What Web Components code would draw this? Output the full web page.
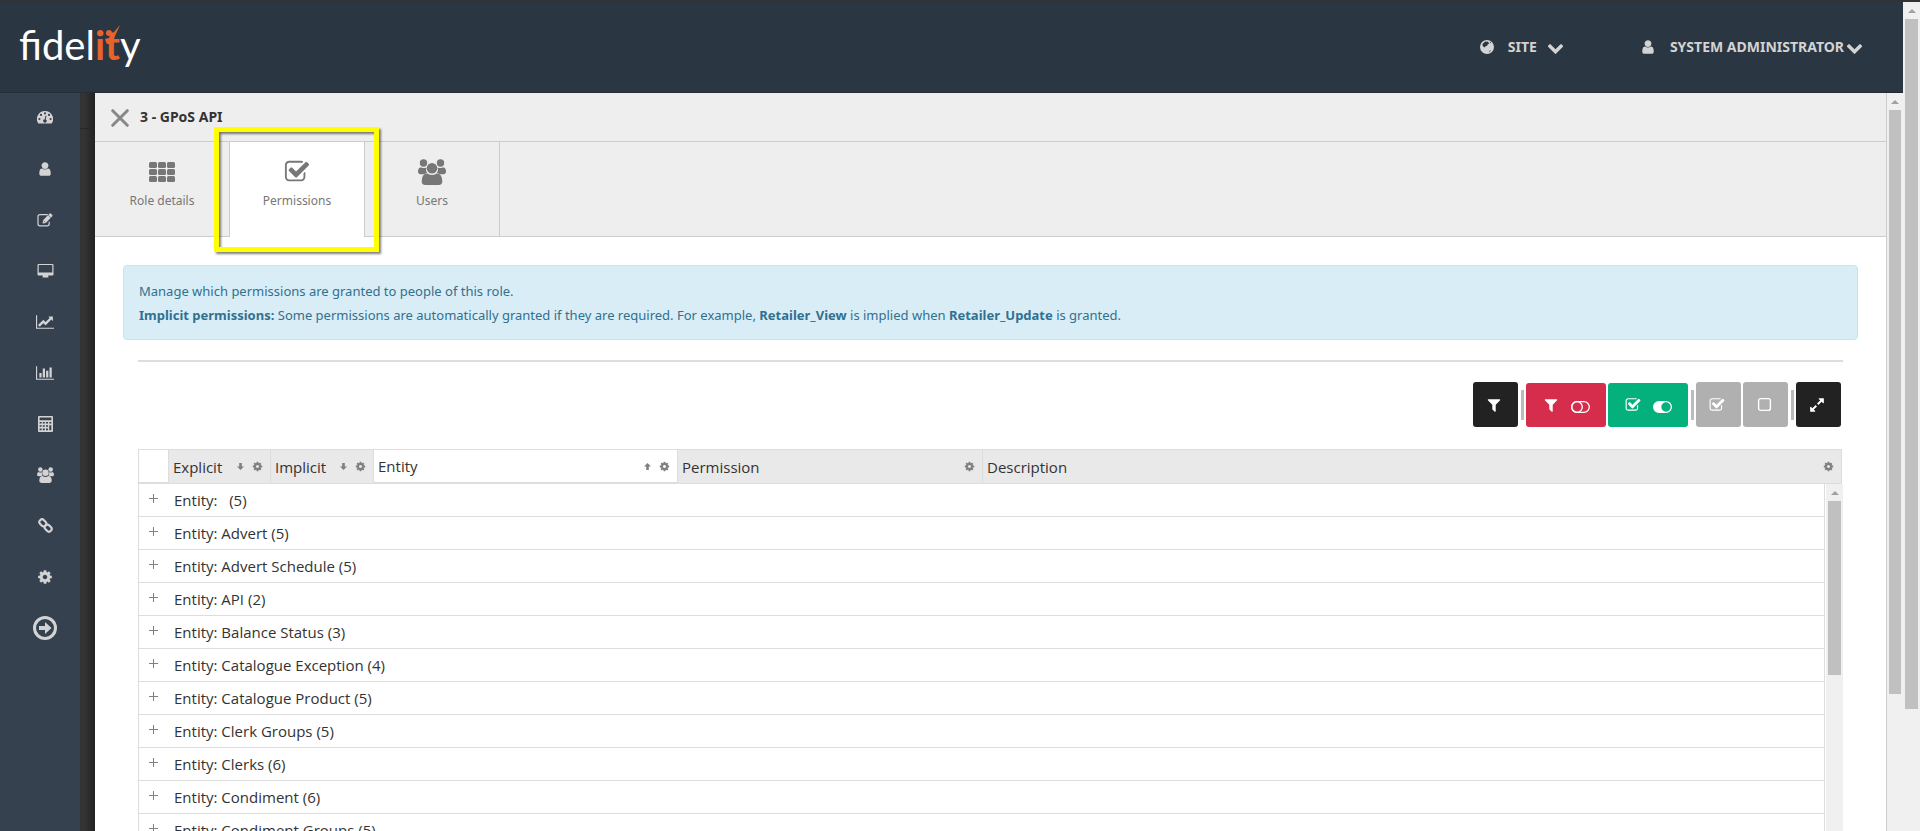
<!DOCTYPE html>
<html lang="en">
<head>
<meta charset="utf-8">
<title>Fidelity - Role permissions</title>
<style>
  body {
    margin: 0;
    height: 100vh;
    overflow: hidden;
    background: #333;
    color: #333;
    font: 13px/24px "Noto Sans", "Open Sans", sans-serif;
  }
</style>
</head>
<body>
<fid-app></fid-app>

<script>
// [viewBox, markup]
const ICONS = {
  user: ["0 0 1792 1792", `<path d="M1536 1399q0 109-62.5 187t-150.5 78h-854q-88 0-150.5-78t-62.5-187q0-85 8.5-160.5t31.5-152 58.5-131 94-89 134.5-34.5q131 128 313 128t313-128q76 0 134.5 34.5t94 89 58.5 131 31.5 152 8.5 160.5zm-256-887q0 159-112.5 271.5t-271.5 112.5-271.5-112.5-112.5-271.5 112.5-271.5 271.5-112.5 271.5 112.5 112.5 271.5z"/>`],
  check: ["0 0 1792 1792", `<path d="M1472 930v318q0 119-84.5 203.5t-203.5 84.5h-832q-119 0-203.5-84.5t-84.5-203.5v-832q0-119 84.5-203.5t203.5-84.5h832q63 0 117 25 15 7 18 23 3 17-9 29l-49 49q-10 10-23 10-3 0-9-2-23-6-45-6h-832q-66 0-113 47t-47 113v832q0 66 47 113t113 47h832q66 0 113-47t47-113v-254q0-13 9-22l64-64q10-10 23-10 6 0 12 3 20 8 20 29zm231-489l-814 814q-24 24-57 24t-57-24l-430-430q-24-24-24-57t24-57l110-110q24-24 57-24t57 24l263 263 647-647q24-24 57-24t57 24l110 110q24 24 24 57t-24 57z"/>`],
  square: ["0 0 14 14", `<rect x="1.5" y="1.5" width="11" height="11" rx="2" fill="none" stroke="currentColor" stroke-width="1.3"/>`],
  cog: ["0 0 1792 1792", `<path d="M1152 896q0-106-75-181t-181-75-181 75-75 181 75 181 181 75 181-75 75-181zm512-109v222q0 12-8 23t-20 13l-185 28q-19 54-39 91 35 50 107 138 10 12 10 25t-9 23q-27 37-99 108t-94 71q-12 0-26-9l-138-108q-44 23-91 38-16 136-29 186-7 28-36 28h-222q-14 0-24.5-8.5t-11.5-21.5l-28-184q-49-16-90-37l-141 107q-10 9-25 9-14 0-25-11-126-114-165-168-7-10-7-23 0-12 8-23 15-21 51-66.5t54-70.5q-27-50-41-99l-183-27q-13-2-21-12.5t-8-23.5v-222q0-12 8-23t19-13l186-28q14-46 39-92-40-57-107-138-10-12-10-24 0-10 9-23 26-36 98.5-107.5t94.5-71.5q13 0 26 10l138 107q44-23 91-38 16-136 29-186 7-28 36-28h222q14 0 24.5 8.5t11.5 21.5l28 184q49 16 90 37l142-107q9-9 24-9 13 0 25 10 129 119 165 170 7 8 7 22 0 12-8 23-15 21-51 66.5t-54 70.5q26 50 41 98l183 28q13 2 21 12.5t8 23.5z"/>`],
  filter: ["0 0 1792 1792", `<path d="M1595 295q17 41-14 70l-493 493v742q0 42-39 59-13 5-25 5-27 0-45-19l-256-256q-19-19-19-45v-486l-493-493q-31-29-14-70 17-39 59-39h1280q42 0 59 39z"/>`],
  expand: ["0 0 1792 1792", `<path d="M883 1056q0 13-10 23l-332 332 144 144q19 19 19 45t-19 45-45 19h-448q-26 0-45-19t-19-45v-448q0-26 19-45t45-19 45 19l144 144 332-332q10-10 23-10t23 10l114 114q10 10 10 23zm781-864v448q0 26-19 45t-45 19-45-19l-144-144-332 332q-10 10-23 10t-23-10l-114-114q-10-10-10-23t10-23l332-332-144-144q-19-19-19-45t19-45 45-19h448q26 0 45 19t19 45z"/>`],
  chevron: ["0 0 1792 1792", `<path d="M1683 808l-742 741q-19 19-45 19t-45-19l-742-741q-19-19-19-45.5t19-45.5l166-165q19-19 45-19t45 19l531 531 531-531q19-19 45-19t45 19l166 165q19 19 19 45.5t-19 45.5z"/>`],
  line: ["0 0 2048 1792", `<path d="M2048 1536v128h-2048v-1536h128v1408h1920zm-128-1248v435q0 21-19.5 29.5t-35.5-7.5l-121-121-633 633q-10 10-23 10t-23-10l-233-233-416 416-192-192 585-585q10-10 23-10t23 10l233 233 464-464-121-121q-16-16-7.5-35.5t29.5-19.5h435q14 0 23 9t9 23z"/>`],
  bars: ["0 0 2048 1792", `<path d="M640 896v512h-256v-512h256zm384-512v1024h-256v-1024h256zm1024 1152v128h-2048v-1536h128v1408h1920zm-640-896v768h-256v-768h256zm384-384v1152h-256v-1152h256z"/>`],
  globe: ["0 0 14 14", `<path fill-rule="evenodd" d="M7 0a7 7 0 1 0 0 14A7 7 0 0 0 7 0zM3.4 3 5.5 1.6 8 1.8 9.2 3.4 7.8 4.2 7 6 5.6 6 5 7.4 3 6.4 2.4 4.6zM9.6 1.6 11 2.6 10.4 3.6zM8.6 11.4 10.6 10 10.2 11.4z"/>`],
  dash: ["0 0 16 13", `<path fill-rule="evenodd" d="M8 0a8 8 0 0 0-7 12q.2.5.8.5h12.4q.6 0 .8-.5A8 8 0 0 0 8 0zM8 1.2a1.1 1.1 0 1 1 0 2.2 1.1 1.1 0 0 1 0-2.2zM4 2.8A1.1 1.1 0 1 1 4 5a1.1 1.1 0 0 1 0-2.2zm8 0A1.1 1.1 0 1 1 12 5a1.1 1.1 0 0 1 0-2.2zM2.4 6.9a1.1 1.1 0 1 1 0 2.2 1.1 1.1 0 0 1 0-2.2zm11.2 0a1.1 1.1 0 1 1 0 2.2 1.1 1.1 0 0 1 0-2.2zM8.6 4.6l.9.2-.8 3.6a1.7 1.7 0 1 1-1-.2z"/>`],
  edit: ["0 0 16 14", `<path fill="none" stroke="currentColor" stroke-width="1.2" stroke-linecap="round" d="M10.3 1.6H3Q1 1.6 1 3.6v7.2q0 2 2 2h7.2q2 0 2-2V9.2"/><path d="m5.6 10.4.4-3.2L12.6.6q.6-.6 1.2 0l1.5 1.5q.6.6 0 1.2L8.8 9.9z"/><path stroke="#364150" stroke-width=".6" d="m11.2 2 2.7 2.7M6.5 7.6l1.8 1.8"/>`],
  desktop: ["0 0 16 14", `<path fill-rule="evenodd" d="M1 0h14q1 0 1 1v9.4q0 1-1 1h-4.4l.4 2H5l.4-2H1q-1 0-1-1V1Q0 0 1 0zm.2 1.1v7.5h13.6V1.1z"/>`],
  calc: ["0 0 15 16", `<path fill-rule="evenodd" d="M1 0h13q1 0 1 1v14q0 1-1 1H1q-1 0-1-1V1Q0 0 1 0zm.6 1.4v2.8h11.8V1.4zM1.6 6v1.6h2V6zm3.2 0v1.6h2V6zm3.2 0v1.6h2V6zm3.3 0v1.6h2V6zM1.6 9.2v1.6h2V9.2zm3.2 0v1.6h2V9.2zm3.2 0v1.6h2V9.2zM1.6 12.5v1.7h2v-1.7zm3.2 0v1.7h2v-1.7zm3.2 0v1.7h2v-1.7zm3.3-3.3v5h2v-5z"/>`],
  users: ["0 0 28 26", `<circle cx="5.5" cy="4" r="3.7"/><circle cx="22.5" cy="4" r="3.7"/><path d="M3 8.2q2.4 1.6 5.2.3-.6 3.6 1 5.4-1.6.1-2.8 1.3H3.2Q0 15.200 0 12.400 0 8.600 3 8.200zM25 8.200q-2.400 1.600-5.200.3.6 3.600-1 5.400 1.600.1 2.800 1.300h3.200q3.200 0 3.200-2.800 0-3.800-3-4.200z"/><circle cx="14" cy="9.300" r="5.300"/><path d="M9.400 14.600q4.600 3 9.200 0 5.700 0 5.700 8 0 3.400-3.600 3.400H7.300q-3.600 0-3.600-3.400 0-8 5.700-8z"/>`],
  link: ["0 0 14 14", `<g fill="none" stroke="currentColor" stroke-width="2"><rect x="1" y="2" width="7" height="5" rx="2.500" transform="rotate(45 4.500 4.500)"/><rect x="6" y="7" width="7" height="5" rx="2.500" transform="rotate(45 9.500 9.500)"/></g>`],
  next: ["0 0 24 24", `<circle cx="12" cy="12" r="10.500" fill="none" stroke="currentColor" stroke-width="3"/><path d="M6 10h6V6l6.500 6-6.500 6v-4H6z"/>`],
  th: ["0 0 26 20", [0, 7, 14].map((y) => [0, 9, 18].map((x) => `<rect x="${x}" y="${y}" width="8" height="6" rx="1.500"/>`).join("")).join("")],
  close: ["0 0 18 18", `<path stroke="currentColor" stroke-width="3" stroke-linecap="round" d="m1.700 1.700 14.600 14.600m0-14.600L1.700 16.300"/>`],
  plus: ["0 0 9 9", `<path d="M4 0h1v4h4v1H5v4H4V5H0V4h4z"/>`],
  down: ["0 0 8 8", `<path d="M2.500 0h3v4H8L4 8 0 4h2.500z"/>`],
  up: ["0 0 8 8", `<path d="M2.500 8h3V4H8L4 0 0 4h2.500z"/>`],
  off: ["0 0 19 12", `<g fill="none" stroke="currentColor" stroke-width="1.300"><rect x=".7" y=".7" width="17.600" height="10.600" rx="5.300"/><circle cx="6" cy="6" r="5.300"/></g>`],
  on: ["0 0 19 12", `<path fill-rule="evenodd" d="M6 0h7a6 6 0 0 1 0 12H6A6 6 0 0 1 6 0zm7 1.300a4.700 4.700 0 1 0 0 9.400 4.700 4.700 0 0 0 0-9.400z"/>`],
};

class FidIcon extends HTMLElement {
  constructor() {
    super();
    this.attachShadow({ mode: "open" });
  }
  connectedCallback() {
    const [viewBox, markup] = ICONS[this.getAttribute("name")];
    const w = this.getAttribute("w") || 14;
    const h = this.getAttribute("h") || w;
    this.shadowRoot.innerHTML = `
      <style>
        :host { display: inline-flex; flex: none; }
        svg { display: block; fill: currentColor; }
      </style>
      <svg width="${w}" height="${h}" viewBox="${viewBox}" aria-hidden="true">${markup}</svg>`;
  }
}
customElements.define("fid-icon", FidIcon);

// Shared by all elements whose shadow tree never changes
const define = (name, html) => {
  const template = document.createElement("template");
  template.innerHTML = html;
  customElements.define(name, class extends HTMLElement {
    constructor() {
      super();
      this.attachShadow({ mode: "open" });
      this.shadowRoot.appendChild(template.content.cloneNode(true));
    }
  });
};

define("fid-scrollbar", `
<style>
  :host { display: flex; flex-direction: column; flex: none; box-sizing: border-box; width: 17px; background: #f0f0f0; }
  .arrow { display: flex; justify-content: center; align-items: center; height: 17px; flex: none; }
  .arrow::before { content: ""; border: 4px solid transparent; border-top: 0; border-bottom-color: #a0a0a0; }
  .track { flex: 1; padding: 0 2px; }
  .thumb { height: var(--thumb, 50%); background: #c0c0c0; }
</style>
<div class="arrow"></div>
<div class="track"><div class="thumb"></div></div>
`);

define("fid-logo", `
<style>
  :host { display: block; }
  a { display: block; color: #fff; font: 40px/46px Lato, sans-serif; text-decoration: none; }
  span { position: relative; color: #e8622c; font-weight: bold; }
  /* raised arm above the t */
  svg { position: absolute; left: 8px; top: 4px; fill: #e8622c; }
</style>
<a href="#">fidel<span>it<svg width="18" height="20" viewBox="0 0 18 20" aria-hidden="true"><path d="M17 0 12 11 9 19H4L2 14l4-1z"/><circle cx="6" cy="8" r="3"/></svg></span>y</a>
`);

define("fid-menu-button", `
<style>
  :host { display: block; }
  button { display: flex; align-items: center; border: 0; padding: 0; background: none; color: #d3d3d3; font: bold 14px/24px "Noto Sans", sans-serif; text-transform: uppercase; }
  .label { margin: 0 var(--gap, 2px) 0 14px; }
</style>
<button type="button"><slot name="icon"></slot><span class="label"><slot></slot></span><fid-icon name="chevron" w="17"></fid-icon></button>
`);

define("fid-topbar", `
<style>
  :host { display: flex; justify-content: space-between; align-items: flex-start; box-sizing: border-box; height: 91px; padding: 20px 40px 0 19px; background: #2b3643; border-bottom: 1px solid #232c37; }
  nav { display: flex; gap: 76px; padding-top: 13px; }
  .site { --gap: 10px; }
</style>
<fid-logo></fid-logo>
<nav>
  <fid-menu-button class="site"><fid-icon slot="icon" name="globe"></fid-icon>Site</fid-menu-button>
  <fid-menu-button><fid-icon slot="icon" name="user" w="16"></fid-icon>System Administrator</fid-menu-button>
</nav>
`);

define("fid-sidebar", `
<style>
  :host { display: block; flex: none; width: 80px; background: #364150; color: #d3d3d3; }
  nav { display: flex; flex-direction: column; }
  a { display: flex; justify-content: center; align-items: center; box-sizing: border-box; height: 51px; padding: 0 0 2px 10px; color: inherit; }
</style>
<nav>
  <a href="#" aria-label="Dashboard"><fid-icon name="dash" w="16" h="13"></fid-icon></a>
  <a href="#" aria-label="Customers"><fid-icon name="user" w="16"></fid-icon></a>
  <a href="#" aria-label="Edit"><fid-icon name="edit" w="16" h="14"></fid-icon></a>
  <a href="#" aria-label="Terminals"><fid-icon name="desktop" w="17" h="14"></fid-icon></a>
  <a href="#" aria-label="Trends"><fid-icon name="line" w="18" h="16"></fid-icon></a>
  <a href="#" aria-label="Reports"><fid-icon name="bars" w="18" h="16"></fid-icon></a>
  <a href="#" aria-label="Accounts"><fid-icon name="calc" w="15" h="16"></fid-icon></a>
  <a href="#" aria-label="Groups"><fid-icon name="users" w="17" h="16"></fid-icon></a>
  <a href="#" aria-label="Links"><fid-icon name="link" w="15"></fid-icon></a>
  <a href="#" aria-label="Settings"><fid-icon name="cog" w="16"></fid-icon></a>
  <a href="#" aria-label="Expand"><fid-icon name="next" w="24"></fid-icon></a>
</nav>
`);

define("fid-tab", `
<style>
  :host { display: block; position: relative; width: 134px; height: 94px; border-right: 1px solid #ccc; }
  :host([active]) { height: 95px; margin-bottom: -1px; background: #fff; }
  button { display: flex; flex-direction: column; align-items: center; gap: 4px; width: 100%; height: 100%; padding: 17px 0 0; border: 0; background: none; color: #777; font: 12px/24px "Noto Sans", sans-serif; }
  .icon { display: flex; align-items: center; height: 26px; }
  /* marker drawn over the tab and its surroundings */
  :host([marked])::after { content: ""; position: absolute; inset: -15px -15px -15px -16px; border: 5px solid #ff0; filter: drop-shadow(2px 2px 1px rgba(0, 0, 0, .5)); pointer-events: none; z-index: 1; }
</style>
<button type="button"><span class="icon"><slot name="icon"></slot></span><slot></slot></button>
`);

define("fid-alert", `
<style>
  :host { display: block; padding: 13px 15px 12px; border: 1px solid #bce8f1; border-radius: 4px; background: #d9edf7; color: #31708f; }
  ::slotted(p) { margin: 0; }
</style>
<slot></slot>
`);

define("fid-button", `
<style>
  :host { display: block; }
  button { display: flex; justify-content: center; align-items: center; gap: 12px; width: 45px; height: 45px; padding: 0 3px 0 0; border: 0; border-radius: 3px; background: #222; color: #fff; }
  :host([wide]) button { width: 80px; height: 44px; padding: 0; }
  :host([kind="danger"]) button { background: #d62d4c; }
  :host([kind="success"]) button { background: #04b07b; }
  :host([kind="muted"]) button { background: #b0b0b0; }
</style>
<button type="button"><slot></slot></button>
`);

define("fid-toolbar", `
<style>
  :host { display: flex; justify-content: flex-end; align-items: flex-end; gap: 2px; padding-right: 2px; }
  i { width: 3px; height: 30px; margin: 0 0 7px 1px; background: #bbb; }
  .switch { padding-top: 3px; }
</style>
<fid-button><fid-icon name="filter" w="16"></fid-icon></fid-button>
<i></i>
<fid-button wide kind="danger"><fid-icon name="filter" w="16"></fid-icon><fid-icon class="switch" name="off" w="19" h="12"></fid-icon></fid-button>
<fid-button wide kind="success"><fid-icon name="check" w="16"></fid-icon><fid-icon class="switch" name="on" w="19" h="12"></fid-icon></fid-button>
<i></i>
<fid-button kind="muted"><fid-icon name="check" w="16"></fid-icon></fid-button>
<fid-button kind="muted"><fid-icon name="square" w="15"></fid-icon></fid-button>
<i></i>
<fid-button><fid-icon name="expand" w="16"></fid-icon></fid-button>
`);

const COLUMNS = [
  { title: "Explicit", width: 102, sort: "down" },
  { title: "Implicit", width: 103, sort: "down" },
  { title: "Entity", width: 304, sort: "up", active: true },
  { title: "Permission", width: 305 },
  { title: "Description" },
];

const GROUPS = [
  ["\u00a0", 5],
  ["Advert", 5],
  ["Advert Schedule", 5],
  ["API", 2],
  ["Balance Status", 3],
  ["Catalogue Exception", 4],
  ["Catalogue Product", 5],
  ["Clerk Groups", 5],
  ["Clerks", 6],
  ["Condiment", 6],
  ["Condiment Groups", 5],
];

class FidGrid extends HTMLElement {
  constructor() {
    super();
    this.attachShadow({ mode: "open" });
  }
  connectedCallback() {
    const heads = COLUMNS.map((c) => `
      <th scope="col" class="${c.active ? "active" : ""}" style="${c.width ? `width: ${c.width}px` : ""}">
        <div>
          <span>${c.title}</span>
          ${c.sort ? `<fid-icon name="${c.sort}" w="7"></fid-icon>` : ""}
          <button type="button" aria-label="${c.title} options"><fid-icon name="cog" w="11"></fid-icon></button>
        </div>
      </th>`).join("");

    const rows = GROUPS.map(([name, count]) => `
      <tr>
        <td class="toggle"><button type="button" aria-label="Expand group"><fid-icon name="plus" w="9"></fid-icon></button></td>
        <td>Entity: ${name} (${count})</td>
      </tr>`).join("");

    this.shadowRoot.innerHTML = `
      <style>
        :host { display: block; font: 15px/24px "Open Sans", sans-serif; }
        table { width: 100%; table-layout: fixed; border-collapse: separate; border-spacing: 0; }
        th, td { box-sizing: border-box; padding: 0; text-align: left; font-weight: normal; }
        button { display: flex; padding: 0; border: 0; background: none; color: #808080; }
        .head { padding-right: 1px; }
        th { height: 35px; border: 1px solid #ddd; border-left: 0; background: #e9e9e9; }
        th.active, th:first-child { background: #fff; border-bottom-width: 2px; }
        th:first-child { width: 31px; border-left: 1px solid #ddd; }
        th div { display: flex; align-items: center; gap: 8px; padding: 0 7px 0 4px; color: #808080; }
        th span { flex: 1; color: #333; }
        .body { display: flex; }
        .body table { flex: 1; width: auto; margin-right: 1px; border-right: 1px solid #ddd; }
        td { height: 33px; padding-left: 5px; border-bottom: 1px solid #ddd; white-space: pre; }
        td.toggle { width: 31px; padding: 0 2px 0 0; border-left: 1px solid #ddd; }
        .toggle button { margin: -4px auto 0; }
      </style>
      <div class="head"><table><thead><tr><th></th>${heads}</tr></thead></table></div>
      <div class="body"><table><tbody>${rows}</tbody></table><fid-scrollbar style="--thumb: 174px"></fid-scrollbar></div>`;
  }
}
customElements.define("fid-grid", FidGrid);

define("fid-panel", `
<style>
  :host { display: block; flex: 1; min-width: 0; background: #fff; }
  header { display: flex; align-items: center; gap: 11px; height: 48px; padding-left: 16px; background: #eee; border-bottom: 1px solid #ccc; }
  header button { display: flex; padding: 2px 0 0; border: 0; background: none; color: #888; }
  h1 { margin: 0; font: bold 14px/24px "Noto Sans", sans-serif; }
  .tabs { display: flex; background: #eee; border-bottom: 1px solid #ccc; }
  .content { padding: 28px; }
  .inner { padding: 0 15px; }
  hr { height: 2px; margin: 20px 0; border: 0; background: #ddd; }
  fid-grid { margin-top: 22px; }
</style>
<header>
  <button type="button" aria-label="Close"><fid-icon name="close" w="18"></fid-icon></button>
  <h1>3 - GPoS API</h1>
</header>
<div class="tabs">
  <fid-tab><fid-icon slot="icon" name="th" w="26" h="20"></fid-icon>Role details</fid-tab>
  <fid-tab active marked><fid-icon slot="icon" name="check" w="26"></fid-icon>Permissions</fid-tab>
  <fid-tab><fid-icon slot="icon" name="users" w="28" h="26"></fid-icon>Users</fid-tab>
</div>
<div class="content">
  <fid-alert>
    <p>Manage which permissions are granted to people of this role.</p>
    <p><b>Implicit permissions:</b> Some permissions are automatically granted if they are required. For example, <b>Retailer_View</b> is implied when <b>Retailer_Update</b> is granted.</p>
  </fid-alert>
  <div class="inner">
    <hr>
    <fid-toolbar></fid-toolbar>
    <fid-grid></fid-grid>
  </div>
</div>
`);

define("fid-app", `
<style>
  :host { display: flex; box-sizing: border-box; height: 100vh; border-top: 2px solid #333; }
  .page { flex: 1; min-width: 0; display: flex; flex-direction: column; }
  .main { flex: 1; min-height: 0; display: flex; overflow: hidden; }
  .gutter { flex: none; width: 15px; background: linear-gradient(to right, #333 30%, #222); }
  .gutter::before { content: ""; display: block; height: 35px; border-bottom: 1px solid #262626; }
  .outer { --thumb: 85%; }
  .side { --thumb: 81%; width: 17px; border-left: 1px solid #ccc; }
</style>
<div class="page">
  <fid-topbar></fid-topbar>
  <div class="main">
    <fid-sidebar></fid-sidebar>
    <div class="gutter"></div>
    <fid-panel></fid-panel>
    <fid-scrollbar class="side"></fid-scrollbar>
  </div>
</div>
<fid-scrollbar class="outer"></fid-scrollbar>
`);
</script>
</body>
</html>
